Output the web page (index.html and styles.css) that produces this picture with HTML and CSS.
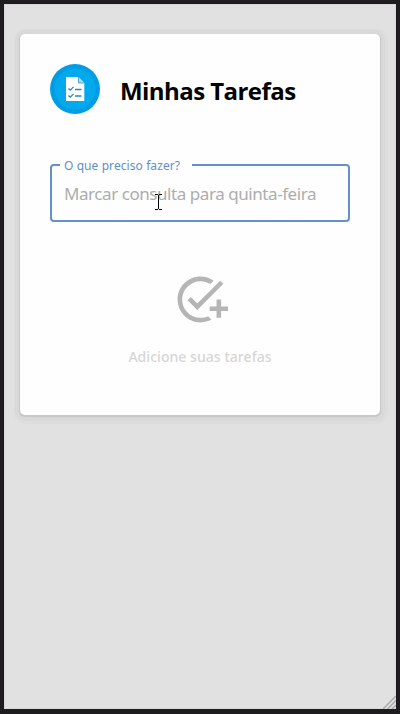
FILE: index.html
```html
<!DOCTYPE html>
<html lang="pt-BR">
<head>
<meta charset="utf-8">
<title>Minhas Tarefas</title>
<link rel="stylesheet" href="styles.css">
</head>
<body>
<main class="card">
  <header class="header">
    <svg class="logo" viewBox="0 0 50 50" aria-hidden="true">
      <circle cx="25" cy="25" r="25" fill="#009de4"/>
      <circle cx="25" cy="25" r="20.5" fill="#03a9ed"/>
      <path d="M16 13h12.5l5.8 6v18H16z" fill="#fff"/>
      <path d="M28.5 13v6h5.8z" fill="#a8ddf5"/>
      <path d="M28.5 13v6h5.8" fill="none" stroke="#2389bc" stroke-width=".7"/>
      <path d="M18.5 24.5l1.8 1.7 3.2-3.3M18.5 31.5l1.8 1.7 3.2-3.3M25 25.5h6.5M25 32h6.5" fill="none" stroke="#2389bc" stroke-width="1.3"/>
    </svg>
    <h1 class="title">Minhas Tarefas</h1>
  </header>
  <fieldset class="field">
    <legend class="legend"><span class="label">O que preciso fazer?</span></legend>
    <div class="placeholder">Marcar consulta para quinta-feira</div>
  </fieldset>
  <section class="empty">
    <svg class="add-task" viewBox="0 0 24 24" aria-hidden="true"><path fill="#b5b5b5" d="M22 5.18 10.59 16.6l-4.24-4.24 1.41-1.41 2.83 2.83 10-10L22 5.18zM12 20c-4.41 0-8-3.59-8-8s3.59-8 8-8c1.57 0 3.04.46 4.28 1.25l1.45-1.45C16.1 2.67 14.13 2 12 2 6.48 2 2 6.48 2 12s4.48 10 10 10c1.73 0 3.36-.44 4.78-1.22l-1.5-1.5c-1 .46-2.11.72-3.28.72zm7-5h-3v2h3v3h2v-3h3v-2h-3v-3h-2v3z"/></svg>
    <p class="hint">Adicione suas tarefas</p>
  </section>
</main>
<svg class="cursor" viewBox="0 0 7 16" aria-hidden="true"><path d="M0 .5h3M4 .5h3M3.5 1v14M0 15.5h3M4 15.5h3" stroke="#000" fill="none"/></svg>
<svg class="grip" viewBox="0 0 13 13" aria-hidden="true"><path d="M0 13L13 0M4.5 13L13 4.5M9 13l4-4" stroke="#aaa" stroke-width="1.5"/></svg>
</body>
</html>
```
FILE: styles.css
```css
* { box-sizing: border-box; }
body {
  margin: 0;
  height: 714px;
  padding: 30px 16px 0;
  border: 4px solid #1e1c1f;
  border-bottom-width: 5px;
  background: #e1e1e1;
  box-shadow: inset 0 0 0 1px #d8d8d8;
  font-family: "Noto Sans", "Open Sans", sans-serif;
  overflow: hidden;
}
.card {
  height: 381px;
  padding: 30px;
  border-radius: 5px;
  background: #fefefe;
  box-shadow: 0 1px 1px 1px #c6c6c6, 0 1px 0 5px #d9d9d9, 1px 2px 0 7px #dddddd;
}
.header { display: flex; align-items: center; gap: 20px; height: 50px; }
.logo { width: 50px; height: 50px; }
.title {
  margin: 4px 0 0;
  font-family: "Open Sans", sans-serif;
  font-size: 24px;
  line-height: 34px;
  font-weight: 700;
  letter-spacing: -0.56px;
  color: #000;
  white-space: nowrap;
}
.field {
  height: 66px;
  margin: 42px 0 0;
  padding: 0 12px;
  border: 2px solid #6190ca;
  border-radius: 4px;
}
.legend { width: 132px; height: 18px; margin-left: -4px; padding: 0 4px; line-height: 16px; white-space: nowrap; }
.label { font-size: 12px; letter-spacing: 0.08px; color: #5f8fcb; }
.placeholder { margin-top: 8px; font-size: 17px; line-height: 24px; letter-spacing: -0.44px; color: #adadad; white-space: nowrap; }
.empty { display: flex; flex-direction: column; align-items: center; margin-top: 50px; }
.add-task { width: 55px; height: 55px; }
.hint { margin: 18px 0 0; font-size: 14px; line-height: 24px; font-weight: 500; letter-spacing: 0.05px; color: #d6d6d6; white-space: nowrap; }
.cursor { position: absolute; left: 155px; top: 194px; width: 7px; height: 16px; }
.grip { position: absolute; left: 383px; top: 696px; width: 13px; height: 13px; }
```
